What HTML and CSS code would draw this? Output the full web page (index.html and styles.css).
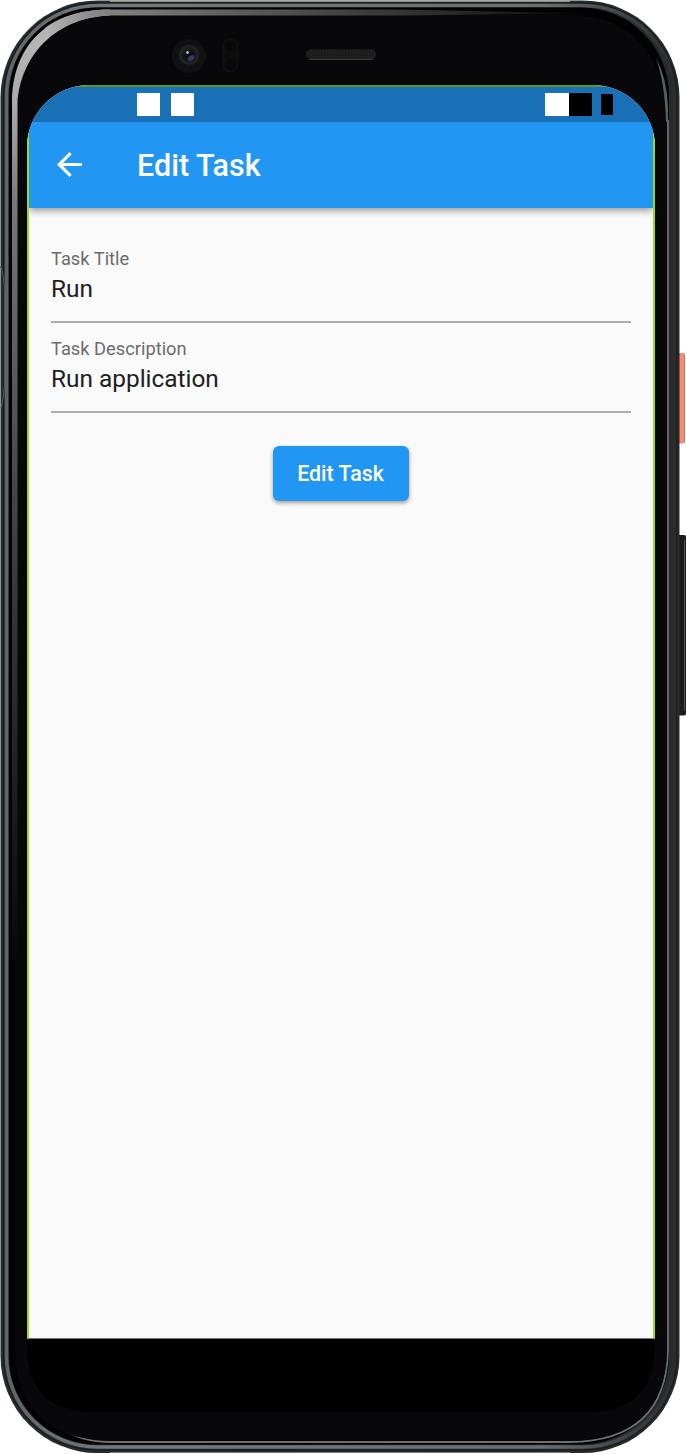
FILE: index.html
```html
<!DOCTYPE html>
<html lang="en">
<head>
<meta charset="utf-8">
<title>Edit Task</title>
<link rel="stylesheet" href="styles.css">
</head>
<body>
<div class="phone">
  <svg class="frame" width="686" height="1454" viewBox="0 0 686 1454" fill="none" aria-hidden="true">
    <defs>
      <linearGradient id="edge" x1="0" x2="1" y1="0" y2="0">
        <stop offset="0" stop-color="#606468"/><stop offset=".15" stop-color="#74797d"/><stop offset=".8" stop-color="#6b7073"/><stop offset=".93" stop-color="#404345"/><stop offset="1" stop-color="#2a2c2e"/>
      </linearGradient>
      <linearGradient id="shine" gradientUnits="userSpaceOnUse" x1="0" x2="0" y1="40" y2="960">
        <stop offset="0" stop-color="#b5b5b5"/><stop offset=".07" stop-color="#aaa"/><stop offset=".18" stop-color="#777"/><stop offset=".5" stop-color="#444"/><stop offset="1" stop-color="#080808"/>
      </linearGradient>
      <linearGradient id="topshine" gradientUnits="userSpaceOnUse" x1="45" x2="590" y1="0" y2="0">
        <stop offset="0" stop-color="#b5b5b5"/><stop offset=".1" stop-color="#858585"/><stop offset=".4" stop-color="#555"/><stop offset="1" stop-color="#080808"/>
      </linearGradient>
      <linearGradient id="power" x1="0" x2="1" y1="0" y2="0">
        <stop offset="0" stop-color="#d6513d"/><stop offset=".4" stop-color="#f28d78"/><stop offset=".8" stop-color="#f28d78"/><stop offset="1" stop-color="#e06a54"/>
      </linearGradient>
      <radialGradient id="lens"><stop offset="0" stop-color="#07070c"/><stop offset=".5" stop-color="#121217"/><stop offset=".85" stop-color="#242428"/><stop offset="1" stop-color="#161617"/></radialGradient>
      <pattern id="mesh" width="3" height="3" patternUnits="userSpaceOnUse"><rect width="3" height="3" fill="#1f1f1f"/><rect width="1.5" height="1.5" fill="#171717"/></pattern>
    </defs>
    <rect x="677" y="353" width="8" height="90.500" rx="2" fill="url(#power)"/>
    <rect x="676" y="535" width="10" height="180.500" rx="2" fill="#1c1c1b"/>
    <path d="M684.500 540V711" stroke="#555" stroke-width="1"/>
    <rect x=".5" y=".5" width="679" height="1452.500" rx="97" fill="#282b2b"/>
    <path d="M110 1H570" stroke="#adb2ab" stroke-width="1.500"/>
    <path d="M110 1452.500H570" stroke="#777c78" stroke-width="1"/>
    <rect x="3.800" y="3" width="673" height="1447" rx="93" stroke="#151718" stroke-width="1"/>
    <rect x="6.500" y="5.500" width="668" height="1441.500" rx="91" stroke="url(#edge)" stroke-width="3.500"/>
    <rect x="9" y="7.500" width="660" height="1437" rx="88" fill="#020203"/>
    <path d="M668 120V1350Q666 1441 570 1442H110Q55 1442 24 1388" stroke="#707070" stroke-width="1.800"/>
    <path d="M667 120V1350Q665 1440 570 1440.500H110Q18 1440 15 1350V120Q17 17 110 15H570Q661 17 667 120Z" fill="#08080a"/>
    <path d="M668 122V108Q667 78 656 58Q665 84 666 122Z" fill="#5b5d5e"/>
    <path d="M12 960V104C12 45 48 9.500 110 9.500V15.500C56 17 20 56 17.500 104V960Z" fill="url(#shine)"/>
    <path d="M45 28Q70 9.500 110 9.500H400L590 13.500L400 15.500H110Q76 16.500 50 36Z" fill="url(#topshine)"/>
    <path d="M0 266Q4 270 4.500 295V380Q4 398 1 408" stroke="#555b5b" stroke-width="1"/>
    <path d="M27 1330H655V1350Q651 1411 592 1412H90Q30 1411 27 1350Z" fill="#000"/>
    <circle cx="189" cy="56" r="17" fill="#111112"/>
    <circle cx="189" cy="55" r="10.500" fill="url(#lens)"/>
    <ellipse cx="191" cy="58" rx="3.500" ry="2.500" fill="#313a65" transform="rotate(-35 191 58)"/>
    <circle cx="187.500" cy="52.500" r="1.400" fill="#bbb"/>
    <rect x="223" y="38.500" width="15" height="33.500" rx="7.500" fill="#0e0e0f" stroke="#121213"/>
    <circle cx="230.500" cy="46" r="5.500" fill="#09090a"/><circle cx="230.500" cy="64.500" r="5.500" fill="#09090a"/>
    <rect x="306.500" y="50" width="69" height="9" rx="4.500" fill="url(#mesh)" stroke="#222"/>
    <path d="M309 59.500H373" stroke="#3b3b3b"/>
  </svg>
  <main class="screen">
    <div class="status">
      <span class="block"></span><span class="block second"></span>
      <span class="block signal"></span><span class="block dark"></span><span class="block battery"></span>
    </div>
    <header class="appbar">
      <svg class="back" viewBox="4 4 16 16"><path fill="#fff" d="M20 11H7.830l5.590-5.590L12 4l-8 8 8 8 1.410-1.410L7.830 13H20v-2z"/></svg>
      <h1 class="title">Edit Task</h1>
    </header>
    <form class="form">
      <div class="field"><span class="label">Task Title</span><span class="value">Run</span></div>
      <div class="field"><span class="label">Task Description</span><span class="value">Run application</span></div>
      <button class="submit" type="button">Edit Task</button>
    </form>
  </main>
</div>
</body>
</html>
```
FILE: styles.css
```css
* { box-sizing: border-box; }
body { margin: 0; background: #fff; font-family: Roboto, "Liberation Sans", sans-serif; }
.phone { position: relative; width: 686px; height: 1454px; padding: 85px 31px 115px 27px; overflow: hidden; }
.frame { position: absolute; left: 0; top: 0; }
.screen {
  position: relative; width: 628px; height: 1254px;
  display: flex; flex-direction: column;
  background: #fafafa; border: 2px solid #a5d51c; border-top-color: #55962a; border-bottom: 1px solid #777;
  border-right-color: #9edb12;
  clip-path: inset(0 round 62px 62px 0 0);
}
.status { display: flex; flex: none; height: 35px; padding: 6px 40px 0 108px; background: #1a70b7; }
.block { width: 23px; height: 23px; background: #fff; }
.second { margin-left: 11px; }
.signal { margin-left: auto; width: 24px; }
.dark { background: #000; }
.battery { width: 12px; height: 21px; margin: 1px 0 0 9px; background: #000; }
.appbar {
  display: flex; flex: none; align-items: center; height: 85.5px; padding-left: 28px;
  background: #2196f3; box-shadow: 0 3px 7px rgba(0,0,0,.38); clip-path: inset(0 0 -20px 0); z-index: 1;
}
.back { width: 25px; height: 25px; }
.title { margin: 3px 0 0 55px; color: #fff; font-size: 30.5px; line-height: 36px; font-weight: 500; }
.form { display: flex; flex-direction: column; padding: 37.5px 22px 0; }
.field { display: flex; flex-direction: column; height: 78px; margin-bottom: 12px; border-bottom: 2px solid #aeaeae; }
.label { color: #6c6c6c; font-size: 18.3px; line-height: 28px; }
.value { color: #202020; font-size: 24.4px; line-height: 32px; }
.submit {
  align-self: center; width: 136px; height: 55px; margin-top: 20.5px; padding: 0 1px 0 0;
  color: #fff; background: #2196f3; border: 0; border-radius: 6px;
  font: 500 21.4px/55px Roboto, "Liberation Sans", sans-serif;
  box-shadow: 0 2px 4px rgba(0,0,0,.38);
}
```
